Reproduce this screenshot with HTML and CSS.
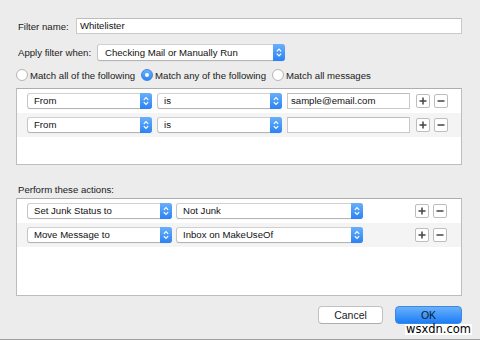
FILE: index.html
```html
<!DOCTYPE html>
<html>
<head>
<meta charset="utf-8">
<link rel="stylesheet" href="styles.css">
</head>
<body>
<div class="dialog">
  <div class="row row-name">
    <span class="label label-name">Filter name:</span>
    <div class="textfield name-field">Whitelister</div>
  </div>
  <div class="row row-when">
    <span class="label label-when">Apply filter when:</span>
    <div class="popup when-popup"><span class="popup-text">Checking Mail or Manually Run</span><span class="arrow"><svg width="12" height="100%" viewBox="0 0 12 16"><path d="M3.8 6.8 L6 4.6 L8.2 6.8 M3.8 9.2 L6 11.4 L8.2 9.2" fill="none" stroke="#fff" stroke-width="1.2"/></svg></span></div>
  </div>
  <div class="row radios">
    <span class="radio"></span><span class="radio-label">Match all of the following</span>
    <span class="radio on"></span><span class="radio-label">Match any of the following</span>
    <span class="radio"></span><span class="radio-label">Match all messages</span>
  </div>
  <div class="box box-criteria">
    <div class="rule">
      <div class="popup w125"><span class="popup-text">From</span><span class="arrow"><svg width="12" height="100%" viewBox="0 0 12 16"><path d="M3.8 6.8 L6 4.6 L8.2 6.8 M3.8 9.2 L6 11.4 L8.2 9.2" fill="none" stroke="#fff" stroke-width="1.2"/></svg></span></div>
      <div class="popup w125"><span class="popup-text">is</span><span class="arrow"><svg width="12" height="100%" viewBox="0 0 12 16"><path d="M3.8 6.8 L6 4.6 L8.2 6.8 M3.8 9.2 L6 11.4 L8.2 9.2" fill="none" stroke="#fff" stroke-width="1.2"/></svg></span></div>
      <div class="textfield value-field">sample@email.com</div>
      <div class="pm">
        <span class="sq"><svg width="8" height="8" viewBox="0 0 8 8"><path d="M4 0.5V7.5M0.5 4H7.5" stroke="#444" stroke-width="1.5"/></svg></span>
        <span class="sq"><svg width="8" height="8" viewBox="0 0 8 8"><path d="M0.5 4H7.5" stroke="#444" stroke-width="1.5"/></svg></span>
      </div>
    </div>
    <div class="rule alt">
      <div class="popup w125"><span class="popup-text">From</span><span class="arrow"><svg width="12" height="100%" viewBox="0 0 12 16"><path d="M3.8 6.8 L6 4.6 L8.2 6.8 M3.8 9.2 L6 11.4 L8.2 9.2" fill="none" stroke="#fff" stroke-width="1.2"/></svg></span></div>
      <div class="popup w125"><span class="popup-text">is</span><span class="arrow"><svg width="12" height="100%" viewBox="0 0 12 16"><path d="M3.8 6.8 L6 4.6 L8.2 6.8 M3.8 9.2 L6 11.4 L8.2 9.2" fill="none" stroke="#fff" stroke-width="1.2"/></svg></span></div>
      <div class="textfield value-field"></div>
      <div class="pm">
        <span class="sq"><svg width="8" height="8" viewBox="0 0 8 8"><path d="M4 0.5V7.5M0.5 4H7.5" stroke="#444" stroke-width="1.5"/></svg></span>
        <span class="sq"><svg width="8" height="8" viewBox="0 0 8 8"><path d="M0.5 4H7.5" stroke="#444" stroke-width="1.5"/></svg></span>
      </div>
    </div>
  </div>
  <div class="row actions-label">
    <span class="label">Perform these actions:</span>
  </div>
  <div class="box box-actions">
    <div class="rule">
      <div class="popup w145"><span class="popup-text">Set Junk Status to</span><span class="arrow"><svg width="12" height="100%" viewBox="0 0 12 16"><path d="M3.8 6.8 L6 4.6 L8.2 6.8 M3.8 9.2 L6 11.4 L8.2 9.2" fill="none" stroke="#fff" stroke-width="1.2"/></svg></span></div>
      <div class="popup w187"><span class="popup-text">Not Junk</span><span class="arrow"><svg width="12" height="100%" viewBox="0 0 12 16"><path d="M3.8 6.8 L6 4.6 L8.2 6.8 M3.8 9.2 L6 11.4 L8.2 9.2" fill="none" stroke="#fff" stroke-width="1.2"/></svg></span></div>
      <div class="pm push">
        <span class="sq"><svg width="8" height="8" viewBox="0 0 8 8"><path d="M4 0.5V7.5M0.5 4H7.5" stroke="#444" stroke-width="1.5"/></svg></span>
        <span class="sq"><svg width="8" height="8" viewBox="0 0 8 8"><path d="M0.5 4H7.5" stroke="#444" stroke-width="1.5"/></svg></span>
      </div>
    </div>
    <div class="rule alt">
      <div class="popup w145"><span class="popup-text">Move Message to</span><span class="arrow"><svg width="12" height="100%" viewBox="0 0 12 16"><path d="M3.8 6.8 L6 4.6 L8.2 6.8 M3.8 9.2 L6 11.4 L8.2 9.2" fill="none" stroke="#fff" stroke-width="1.2"/></svg></span></div>
      <div class="popup w187"><span class="popup-text">Inbox on MakeUseOf</span><span class="arrow"><svg width="12" height="100%" viewBox="0 0 12 16"><path d="M3.8 6.8 L6 4.6 L8.2 6.8 M3.8 9.2 L6 11.4 L8.2 9.2" fill="none" stroke="#fff" stroke-width="1.2"/></svg></span></div>
      <div class="pm push">
        <span class="sq"><svg width="8" height="8" viewBox="0 0 8 8"><path d="M4 0.5V7.5M0.5 4H7.5" stroke="#444" stroke-width="1.5"/></svg></span>
        <span class="sq"><svg width="8" height="8" viewBox="0 0 8 8"><path d="M0.5 4H7.5" stroke="#444" stroke-width="1.5"/></svg></span>
      </div>
    </div>
  </div>
  <div class="row buttons">
    <span class="btn cancel">Cancel</span>
    <span class="btn ok">OK</span>
  </div>
  <div class="watermark">wsxdn.com</div>
</div>
</body>
</html>
```
FILE: styles.css
```css
* { box-sizing: border-box; }
html, body { margin: 0; padding: 0; }
body {
  background: #ececec;
  font-family: "Liberation Sans", Arial, sans-serif;
  font-size: 9.6px;
  color: #1a1a1a;
}
.dialog {
  position: relative;
  width: 480px;
  height: 340px;
  background: #ececec;
  border-bottom: 1px solid #9d9d9d;
  padding: 18px 18px 0 16px;
  display: flex;
  flex-direction: column;
}
.row { display: flex; align-items: center; }
.label { padding-left: 2px; }
.row-name { height: 16px; }
.label-name { width: 60px; }
.textfield {
  background: #fff;
  border: 1px solid #c9c9c9;
  border-top-color: #bcbcbc;
  height: 16px;
  line-height: 14px;
  padding-left: 3px;
  color: #111;
}
.name-field { width: 387px; }
.row-when { height: 17px; margin-top: 10px; }
.label-when { width: 81px; }
.popup {
  display: flex;
  align-items: stretch;
  height: 16px;
  background: #fff;
  border: 1px solid #c6c6c6;
  border-top-color: #d0d0d0;
  border-bottom-color: #b4b4b4;
  border-radius: 3px;
  box-shadow: 0 0.5px 0 rgba(0,0,0,0.05);
}
.when-popup { width: 188px; height: 17px; }
.popup-text {
  flex: 1;
  padding-left: 6px;
  line-height: 14px;
  color: #111;
  white-space: nowrap;
  overflow: hidden;
}
.when-popup .popup-text { padding-left: 7px; line-height: 15px; }
.arrow {
  width: 12px;
  margin: -1px -1px -1px 0;
  background: linear-gradient(#68b0fb, #2b82f3);
  border-radius: 0 3px 3px 0;
  display: flex;
}
.radios { height: 12px; margin-top: 8px; }
.radio {
  width: 12px; height: 12px;
  border-radius: 50%;
  background: #fff;
  border: 1px solid #b5b5b5;
  margin-right: 2px;
  position: relative;
  flex: none;
}
.radio.on {
  background: linear-gradient(#6ab2fb, #2c84f5);
  border-color: #3b86e6;
}
.radio.on::after {
  content: "";
  position: absolute;
  left: 3px; top: 3px;
  width: 4px; height: 4px;
  border-radius: 50%;
  background: #fff;
}
.radio-label { margin-right: 6px; }
.box {
  width: 446px;
  background: #fff;
  border: 1px solid #bdbdbd;
  border-top-color: #aeaeae;
}
.box-criteria { height: 77px; margin-top: 7px; }
.rule {
  height: 24px;
  display: flex;
  align-items: center;
  padding-left: 10px;
}
.rule.alt { background: #f4f4f4; }
.rule .popup, .rule .textfield { margin-right: 5px; }
.w125 { width: 125px; }
.w145 { width: 145px; margin-right: 4px !important; }
.w187 { width: 187px; }
.value-field { width: 123px; }
.pm { display: flex; gap: 4px; margin-left: 1px; }
.pm.push { margin-left: auto; margin-right: 14px; }
.sq {
  width: 14px; height: 14px;
  background: #fff;
  border: 1px solid #bdbdbd;
  border-radius: 2px;
  display: flex;
  align-items: center;
  justify-content: center;
}
.actions-label { height: 12px; margin-top: 18px; }
.box-actions { height: 98px; margin-top: 3px; }
.buttons {
  justify-content: flex-end;
  gap: 12px;
  margin-top: 10px;
  width: 446px;
}
.btn {
  height: 18px;
  border-radius: 4px;
  display: flex;
  align-items: center;
  justify-content: center;
  font-size: 10.5px;
}
.cancel {
  width: 65px;
  background: #fff;
  border: 1px solid #c2c2c2;
  border-bottom-color: #adadad;
}
.ok {
  width: 67px;
  background: linear-gradient(#69b1fb, #1c7ef6);
  border: 1px solid #3d87e4;
  color: #0d1b33;
}
.watermark {
  position: absolute;
  left: 405px;
  top: 324px;
  background: #fff;
  color: #000;
  font-family: "DejaVu Sans", sans-serif;
  font-size: 11.5px;
  line-height: 11px;
  padding: 0 1px;
}
```
